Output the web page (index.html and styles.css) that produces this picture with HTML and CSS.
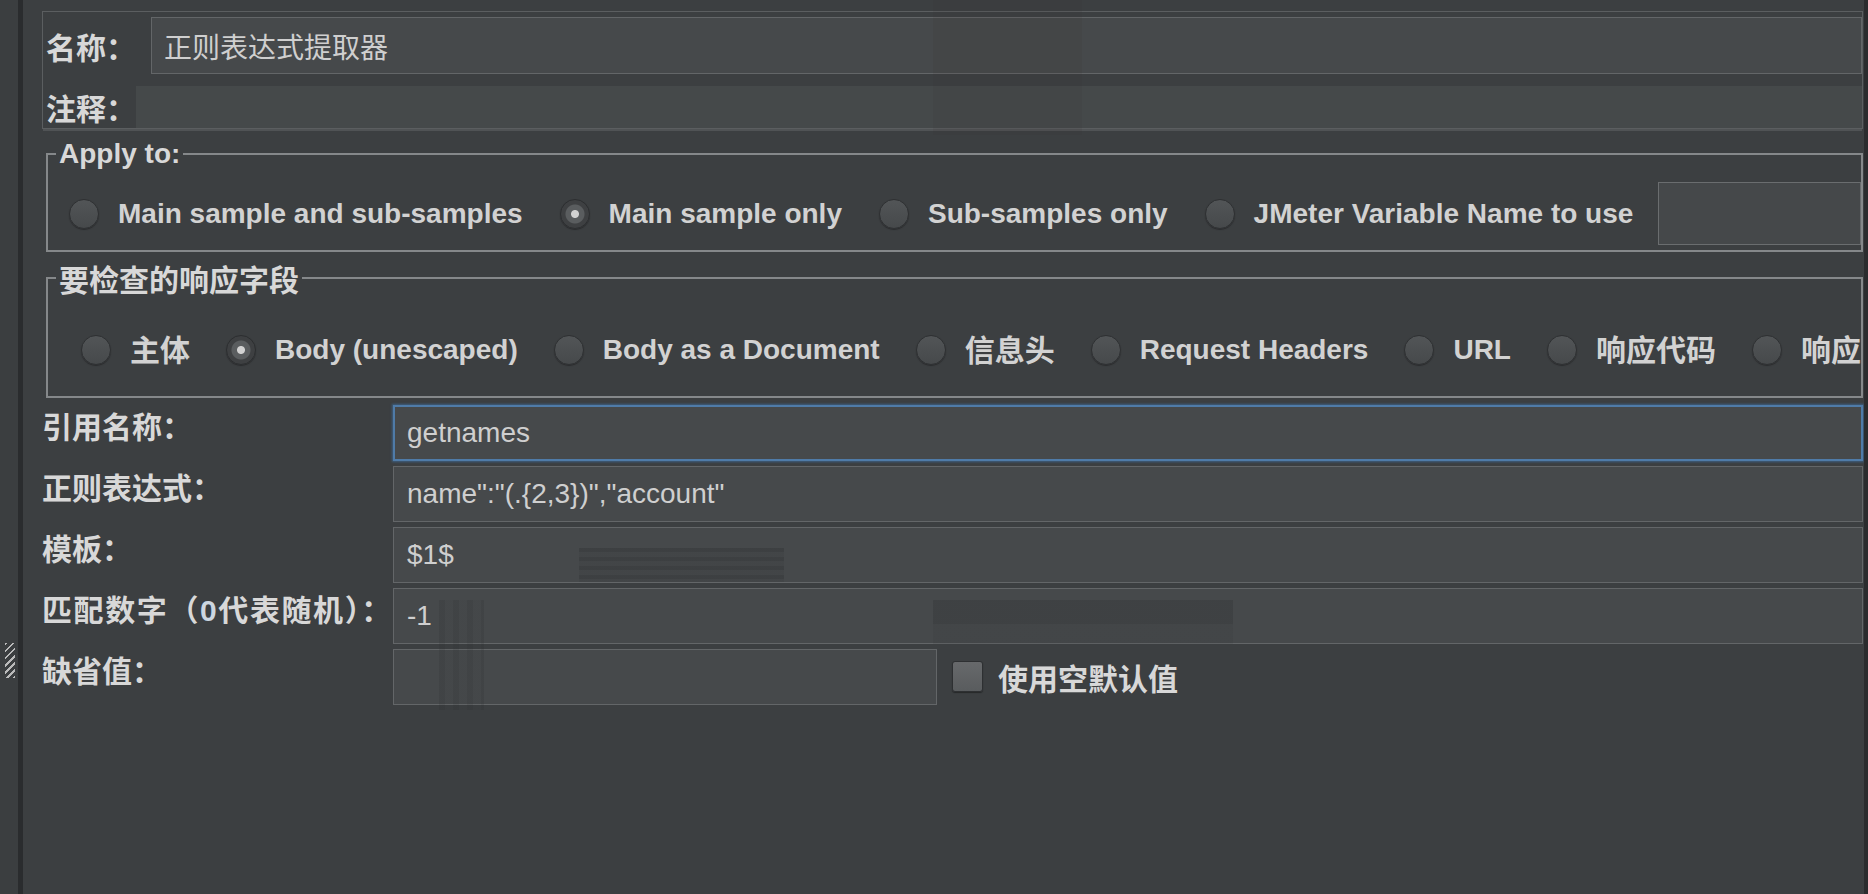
FILE: index.html
```html
<!DOCTYPE html>
<html lang="zh-CN">
<head>
<meta charset="utf-8">
<title>正则表达式提取器</title>
<link rel="stylesheet" href="styles.css">
</head>
<body>
<div class="app">
  <div class="side"><div class="grip"></div></div>
  <div class="main">
    <div class="namebox">
      <div class="nrow">
        <span class="lbl lbl-name">名称：</span>
        <div class="field name-field">正则表达式提取器</div>
      </div>
      <div class="nrow crow">
        <span class="lbl lbl-comment">注释：</span>
        <div class="field comment-field"></div>
      </div>
    </div>

    <fieldset class="group apply">
      <legend class="lat">Apply to:</legend>
      <div class="radios apply-radios">
        <span class="ritem"><span class="radio"></span><span class="rtext">Main sample and sub-samples</span></span>
        <span class="ritem"><span class="radio on"></span><span class="rtext">Main sample only</span></span>
        <span class="ritem"><span class="radio"></span><span class="rtext">Sub-samples only</span></span>
        <span class="ritem"><span class="radio"></span><span class="rtext">JMeter Variable Name to use</span></span>
        <div class="field var-field"></div>
      </div>
    </fieldset>

    <fieldset class="group check">
      <legend class="cjk">要检查的响应字段</legend>
      <div class="radios check-radios">
        <span class="ritem"><span class="radio"></span><span class="rtext cjk">主体</span></span>
        <span class="ritem"><span class="radio on"></span><span class="rtext">Body (unescaped)</span></span>
        <span class="ritem"><span class="radio"></span><span class="rtext">Body as a Document</span></span>
        <span class="ritem"><span class="radio"></span><span class="rtext cjk">信息头</span></span>
        <span class="ritem"><span class="radio"></span><span class="rtext">Request Headers</span></span>
        <span class="ritem"><span class="radio"></span><span class="rtext">URL</span></span>
        <span class="ritem"><span class="radio"></span><span class="rtext cjk">响应代码</span></span>
        <span class="ritem"><span class="radio"></span><span class="rtext cjk">响应信息</span></span>
      </div>
    </fieldset>

    <div class="form">
      <div class="frow">
        <span class="flabel">引用名称：</span>
        <div class="field tf focus">getnames</div>
      </div>
      <div class="frow">
        <span class="flabel">正则表达式：</span>
        <div class="field tf">name":"(.{2,3})","account"</div>
      </div>
      <div class="frow">
        <span class="flabel">模板：</span>
        <div class="field tf">$1$</div>
      </div>
      <div class="frow">
        <span class="flabel wide">匹配数字（<span class="zero">0</span>代表随机）：</span>
        <div class="field tf">-1</div>
      </div>
      <div class="frow">
        <span class="flabel">缺省值：</span>
        <div class="field tf short"></div>
        <span class="checkbox"></span>
        <span class="cblabel">使用空默认值</span>
      </div>
    </div>
  </div>
  <div class="edge"></div>

  <div class="smudge s1"></div>
  <div class="smudge s2"></div>
  <div class="smudge s3"></div>
  <div class="smudge s4"></div>
</div>
</body>
</html>
```

FILE: styles.css
```css
html, body {
  margin: 0;
  padding: 0;
  height: 100%;
}

body {
  background: #3c3f41;
  color: #d4d4d4;
  font-family: "Liberation Sans", "Noto Sans CJK SC", sans-serif;
  overflow: hidden;
}

.app {
  position: relative;
  display: flex;
  height: 894px;
}

/* left splitter strip */
.side {
  width: 18px;
  flex: none;
  background: #3b3e40;
  border-right: 5px solid #2a2c2e;
  display: flex;
  flex-direction: column;
}

.grip {
  width: 10px;
  height: 35px;
  margin: 643px 0 0 5px;
  background: repeating-linear-gradient(135deg, #d0d0d0 0 2px, transparent 2px 5px);
  opacity: 0.85;
}

.edge {
  width: 4px;
  flex: none;
  background: #2b2c2e;
}

.main {
  flex: 1;
  min-width: 0;
  padding: 11px 1px 0 19px;
}

/* generic */
.cjk {
  font-family: "Noto Sans CJK SC", sans-serif;
  font-size: 30px;
  font-weight: 700;
}

.field {
  box-sizing: border-box;
  background: #46494b;
  border: 1px solid #636668;
  color: #cfcfcf;
  display: flex;
  align-items: center;
  white-space: nowrap;
  overflow: hidden;
}

/* name / comment box */
.namebox {
  box-sizing: border-box;
  height: 118px;
  border: 1px solid #5b5e60;
  padding: 5px 0 0 3px;
  box-shadow: 0 3px 0 -1px #505355;
}

.nrow {
  display: flex;
  align-items: center;
  height: 57px;
}

.crow {
  margin-top: 12px;
  height: 42px;
}

.lbl {
  flex: none;
  font-family: "Noto Sans CJK SC", sans-serif;
  font-size: 30px;
  font-weight: 700;
  line-height: 32px;
  color: #d8d8d8;
}

.lbl-name { width: 105px; }
.lbl-comment { width: 90px; }

.name-field {
  flex: 1;
  height: 57px;
  padding-left: 12px;
  font-family: "Noto Sans CJK SC", sans-serif;
  font-size: 28px;
  font-weight: 400;
}

.comment-field {
  flex: 1;
  height: 42px;
  border: none;
  background: #45494a;
}

/* group boxes */
.group {
  min-width: 0;
  margin: 9px 0 0 4px;
  padding: 0 0 5px 8px;
  border: 2px solid #85888a;
}

.group legend {
  padding: 0 3px;
  line-height: 32px;
  color: #d8d8d8;
}

.lat {
  font-size: 28px;
  font-weight: 700;
}

.radios {
  display: flex;
  align-items: center;
  white-space: nowrap;
  overflow: hidden;
  min-width: 0;
}

.apply-radios {
  margin-top: 12px;
  height: 63px;
  padding-left: 13px;
}

.check {
  margin-top: 10px;
  padding-bottom: 23px;
}

.check-radios {
  margin-top: 32px;
  height: 47px;
  padding-left: 25px;
}

.ritem {
  display: flex;
  align-items: center;
  flex: none;
  margin-right: 37px;
}

.check-radios .ritem {
  margin-right: 36px;
}

.radio {
  box-sizing: border-box;
  width: 30px;
  height: 30px;
  flex: none;
  border-radius: 50%;
  margin-right: 19px;
  background: linear-gradient(#525557, #46494b);
  border: 1px solid #2e3032;
  box-shadow: 0 1px 1px #2a2b2d;
}

.radio.on {
  background: radial-gradient(circle, #d2d2d2 0 3.5px, #5a5d5f 4.5px 9px, #3e4042 10px);
  border-color: #2c2e30;
}

.rtext {
  font-size: 28px;
  font-weight: 700;
  line-height: 32px;
  color: #d2d2d2;
}

.rtext.cjk {
  font-size: 30px;
  line-height: 34px;
  margin-top: -4px;
}

.var-field {
  flex: 1;
  height: 63px;
  margin-left: -12px;
  border-color: #6a6d6f;
  background: #45484a;
}

/* form rows */
.form {
  margin-top: 7px;
  display: flex;
  flex-direction: column;
  gap: 5px;
}

.frow {
  display: flex;
  align-items: flex-start;
  height: 56px;
}

.flabel {
  flex: none;
  width: 351px;
  padding-top: 4px;
  font-family: "Noto Sans CJK SC", sans-serif;
  font-size: 30px;
  font-weight: 700;
  line-height: 32px;
  color: #d8d8d8;
  white-space: nowrap;
}

.flabel.wide {
  letter-spacing: 1.6px;
}

.zero {
  font-family: "Liberation Sans", sans-serif;
  color: #cdd6e0;
}

.tf {
  flex: 1;
  height: 56px;
  padding-left: 13px;
  font-size: 28px;
  font-weight: 400;
}

.tf.focus {
  border: 2px solid #4f7ba8;
  box-shadow: 0 0 2px 1px #3d5f82;
  padding-left: 12px;
}

.tf.short {
  flex: none;
  width: 544px;
}

.checkbox {
  box-sizing: border-box;
  flex: none;
  width: 31px;
  height: 31px;
  margin: 12px 0 0 15px;
  border-radius: 3px;
  border: 1px solid #2e3032;
  background: linear-gradient(#67696b, #595c5e);
  box-shadow: 0 1px 1px #262829;
}

.cblabel {
  margin: 12px 0 0 15px;
  font-family: "Noto Sans CJK SC", sans-serif;
  font-size: 30px;
  font-weight: 700;
  line-height: 32px;
  color: #d8d8d8;
}

/* compression / masking artifacts that sit over the content */
.smudge {
  position: absolute;
  pointer-events: none;
}

.s1 {
  left: 933px;
  top: 0;
  width: 149px;
  height: 135px;
  background: rgba(60, 52, 48, 0.12);
}

.s2 {
  left: 579px;
  top: 548px;
  width: 205px;
  height: 34px;
  background: repeating-linear-gradient(180deg, rgba(40, 42, 44, 0.3) 0 4px, rgba(40, 42, 44, 0.12) 4px 9px);
}

.s3 {
  left: 933px;
  top: 600px;
  width: 300px;
  height: 44px;
  background: linear-gradient(180deg, rgba(40, 42, 44, 0.25) 0 55%, rgba(40, 42, 44, 0.1) 55% 100%);
}

.s4 {
  left: 439px;
  top: 600px;
  width: 45px;
  height: 110px;
  background: repeating-linear-gradient(90deg, rgba(40, 42, 44, 0.18) 0 6px, rgba(40, 42, 44, 0.05) 6px 14px);
}
```
